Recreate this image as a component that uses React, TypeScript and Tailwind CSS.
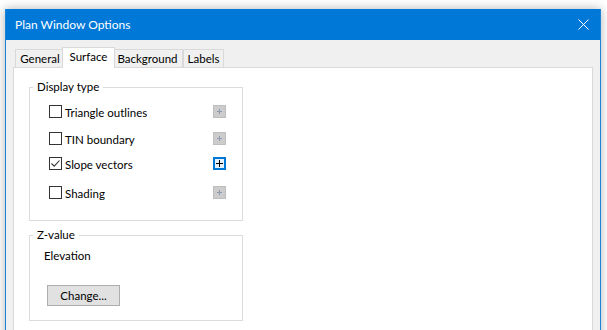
import { ReactNode } from "react";

const font = { fontFamily: "Lato, 'Liberation Sans', sans-serif" };

function PlusButton({ active }: { active?: boolean }) {
  if (active) {
    return (
      <div className="flex h-[13px] w-[13px] items-center justify-center border-2 border-[#0078d7] bg-[#e5f1fb]">
        <svg width="7" height="7" viewBox="0 0 7 7">
          <path d="M3.5 0v7M0 3.5h7" stroke="#000" strokeWidth="1" />
        </svg>
      </div>
    );
  }
  return (
    <div className="flex h-[13px] w-[13px] items-center justify-center border border-[#bfbfbf] bg-[#cccccc]">
      <svg width="7" height="7" viewBox="0 0 7 7">
        <path d="M3.5 1v5M1 3.5h5" stroke="#8d9bb0" strokeWidth="1" />
      </svg>
    </div>
  );
}

function CheckRow({ label, checked, active, className }: { label: string; checked?: boolean; active?: boolean; className: string }) {
  return (
    <div className={`flex h-[13px] items-center pl-[19px] pr-[16px] ${className}`}>
      <div className="flex h-[13px] w-[13px] items-center justify-center border border-[#333333] bg-white">
        {checked && (
          <svg width="11" height="11" viewBox="0 0 11 11">
            <path d="M1.5 5.5l2.7 2.7L9.5 2.5" stroke="#333" strokeWidth="1.1" fill="none" />
          </svg>
        )}
      </div>
      <span className="ml-[3px] pt-[2px] text-[11.5px] leading-[16px] text-black">{label}</span>
      <div className="ml-auto">
        <PlusButton active={active} />
      </div>
    </div>
  );
}

function GroupBox({ title, className, children }: { title: string; className: string; children: ReactNode }) {
  return (
    <div className={`relative ml-[15px] w-[214px] border border-[#dcdcdc] ${className}`}>
      <span className="absolute -top-[9px] left-[3px] bg-white px-[4px] text-[11.5px] leading-[16px] text-black">{title}</span>
      {children}
    </div>
  );
}

function Tab({ label, selected, className }: { label: string; selected?: boolean; className: string }) {
  if (selected) {
    return (
      <div
        className={`relative z-10 -mx-[2px] -mb-px flex h-[21px] items-start justify-center border border-b-0 border-[#d9d9d9] bg-white pt-[1px] text-[11.5px] leading-[16px] text-black ${className}`}
      >
        {label}
      </div>
    );
  }
  return (
    <div
      className={`flex h-[18px] items-start justify-center border border-b-0 border-[#d9d9d9] bg-[#f0f0f0] pt-[1px] text-[11.5px] leading-[16px] text-black ${className}`}
    >
      {label}
    </div>
  );
}

export default function App() {
  return (
    <div className="h-[330px] w-[607px] overflow-hidden bg-white pl-[5px] pt-[9px]" style={font}>
      <div className="h-[340px] w-[596px] border-x border-[#1883d7] bg-[#f0f0f0] shadow-[0_0_10px_rgba(0,0,0,0.3)]">
        <div className="flex h-[31px] items-center bg-[#0078d7] pl-[9px] pr-[11px]">
          <span className="text-[12px] text-white">Plan Window Options</span>
          <svg className="ml-auto" width="11" height="11" viewBox="0 0 11 11">
            <path d="M0.5 0.5l10 10M10.5 0.5l-10 10" stroke="#fff" strokeWidth="1" />
          </svg>
        </div>
        <div className="pl-[7px] pt-[7px]">
          <div className="flex h-[20px] items-end pl-[2px]">
            <Tab label="General" className="w-[49px] border-r-0" />
            <Tab label="Surface" selected className="w-[53px]" />
            <Tab label="Background" className="w-[70px] border-l-0" />
            <Tab label="Labels" className="w-[41px]" />
          </div>
          <div className="h-[300px] w-[580px] border border-[#d9d9d9] bg-white pt-[19px]">
            <GroupBox title="Display type" className="h-[134px] pt-[17px]">
              <CheckRow label="Triangle outlines" className="" />
              <CheckRow label="TIN boundary" className="mt-[14px]" />
              <CheckRow label="Slope vectors" checked active className="mt-[12px]" />
              <CheckRow label="Shading" className="mt-[16px]" />
            </GroupBox>
            <GroupBox title="Z-value" className="mt-[14px] h-[86px] pt-[12px]">
              <div className="pl-[14px] text-[11.5px] leading-[16px] text-black">Elevation</div>
              <button className="ml-[17px] mt-[21px] flex h-[21px] w-[73px] items-center justify-center border border-[#adadad] bg-[#e1e1e1] text-[11.5px] text-black">
                Change...
              </button>
            </GroupBox>
          </div>
        </div>
      </div>
    </div>
  );
}
